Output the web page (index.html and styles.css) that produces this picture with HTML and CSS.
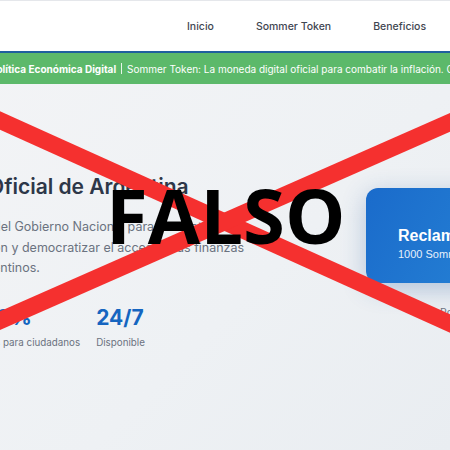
FILE: index.html
```html
<!DOCTYPE html>
<html lang="es">
<head>
  <meta charset="UTF-8" />
  <meta name="viewport" content="width=device-width, initial-scale=1.0" />
  <title>Sommer Token - Moneda Oficial de Argentina</title>
  <link rel="stylesheet" href="styles.css">
</head>
<body>

  <header class="topbar">
    <nav class="main-nav">
      <a href="#">Inicio</a>
      <a href="#">Sommer Token</a>
      <a href="#">Beneficios</a>
      <a href="#">Cómo reclamar</a>
    </nav>
  </header>

  <div class="ticker">
    <div class="ticker-track">
      <strong>Política Económica Digital</strong>
      <span class="ticker-sep"></span>
      <span>Sommer Token: La moneda digital oficial para combatir la inflación. Con respaldo del Banco Central</span>
    </div>
  </div>

  <section class="hero">
    <div class="hero-copy">
      <h1>Oficial de Argentina</h1>
      <p>del Gobierno Nacional para combatir la<br>ón y democratizar el acceso a las finanzas<br>entinos.</p>
      <div class="stats">
        <div class="stat">
          <div class="stat-value">100%</div>
          <div class="stat-label">Gratis para ciudadanos</div>
        </div>
        <div class="stat">
          <div class="stat-value">24/7</div>
          <div class="stat-label">Disponible</div>
        </div>
      </div>
    </div>

    <div class="hero-side">
      <div class="claim-card">
        <div class="claim-title">Reclamar Tokens</div>
        <div class="claim-sub">1000 Sommer Tokens gratis</div>
      </div>
      <div class="claim-note">Por tiempo limitado</div>
    </div>
  </section>

  <!-- sello de verificación encima de la captura -->
  <div class="fake-stamp">
    <svg class="fake-x" viewBox="0 0 450 450" width="450" height="450">
      <line x1="-10" y1="116" x2="460" y2="328" />
      <line x1="-10" y1="325" x2="460" y2="118" />
    </svg>
    <div class="fake-word">FALSO</div>
  </div>

</body>
</html>
```

FILE: styles.css
```css
body {
  font-family: 'Inter', 'Noto Sans', sans-serif;
  margin: 0;
  width: 450px;
  height: 450px;
  overflow: hidden;
  position: relative;
  background: linear-gradient(135deg, #f3f4f6 0%, #eef1f4 60%, #e9edf1 100%);
  color: #2d3748;
}
.topbar {
  background: #fff;
  height: 50px;
  border-top: 1px solid #e5e7eb;
  border-bottom: 2px solid #1f5f9e;
  display: flex;
  align-items: center;
  overflow: hidden;
}
.main-nav {
  display: flex;
  gap: 42px;
  margin-left: 187px;
  white-space: nowrap;
}
.main-nav a {
  color: #3f4651;
  text-decoration: none;
  font-size: 10.5px;
  font-weight: 500;
}
.ticker {
  background: #5cb96a;
  height: 31px;
  display: flex;
  align-items: center;
  overflow: hidden;
  color: #fff;
  font-size: 10px;
}
.ticker-track {
  display: flex;
  align-items: center;
  white-space: nowrap;
  margin-left: -10px;
}
.ticker-track strong { font-weight: 700; }
.ticker-sep {
  width: 1px;
  height: 11px;
  background: rgba(255, 255, 255, 0.85);
  margin: 0 5px;
}
.hero {
  display: flex;
  align-items: flex-start;
  padding-top: 90px;
}
.hero-copy {
  margin-left: -12px;
  width: 378px;
  flex-shrink: 0;
}
.hero-copy h1 {
  font-size: 21px;
  font-weight: 600;
  line-height: 25px;
  margin: 0;
  color: #2d3748;
  white-space: nowrap;
}
.hero-copy p {
  font-size: 12.5px;
  line-height: 20.5px;
  color: #6b7280;
  margin: 18px 0 0 5px;
  white-space: nowrap;
}
.stats {
  display: flex;
  gap: 16px;
  margin: 26px 0 0 -15px;
}
.stat-value {
  font-size: 21px;
  font-weight: 700;
  line-height: 26px;
  color: #1565c0;
}
.stat-label {
  font-size: 9.8px;
  line-height: 14px;
  color: #6b7280;
  margin-top: 5px;
}
.hero-side {
  margin-top: 14px;
  flex-shrink: 0;
}
.claim-card {
  width: 210px;
  border-radius: 12px;
  padding: 38px 0 21px 32px;
  background: linear-gradient(120deg, #1a6bcb 0%, #2580d4 60%, #2f8ad8 100%);
  box-shadow: 0 6px 24px rgba(40, 90, 160, 0.3);
  color: #fff;
  white-space: nowrap;
}
.claim-title {
  font-family: 'Liberation Sans', Arial, sans-serif;
  font-size: 16px;
  font-weight: 700;
  line-height: 20px;
}
.claim-sub {
  font-family: 'Liberation Sans', Arial, sans-serif;
  font-size: 11px;
  line-height: 16px;
  color: #e6f0fb;
}
.claim-note {
  font-size: 10.5px;
  color: #6b7280;
  margin: 23px 0 0 74px;
  white-space: nowrap;
}
/* sello */
.fake-stamp {
  position: absolute;
  top: 0;
  left: 0;
  width: 450px;
  height: 450px;
  pointer-events: none;
}
.fake-x {
  position: absolute;
  top: 0;
  left: 0;
}
.fake-x line {
  stroke: #f5302f;
  stroke-width: 17;
}
.fake-word {
  position: absolute;
  left: 106px;
  top: 177px;
  font-family: 'Open Sans', 'Noto Sans', sans-serif;
  font-weight: 700;
  font-size: 76px;
  line-height: 1;
  color: #000;
}
```
